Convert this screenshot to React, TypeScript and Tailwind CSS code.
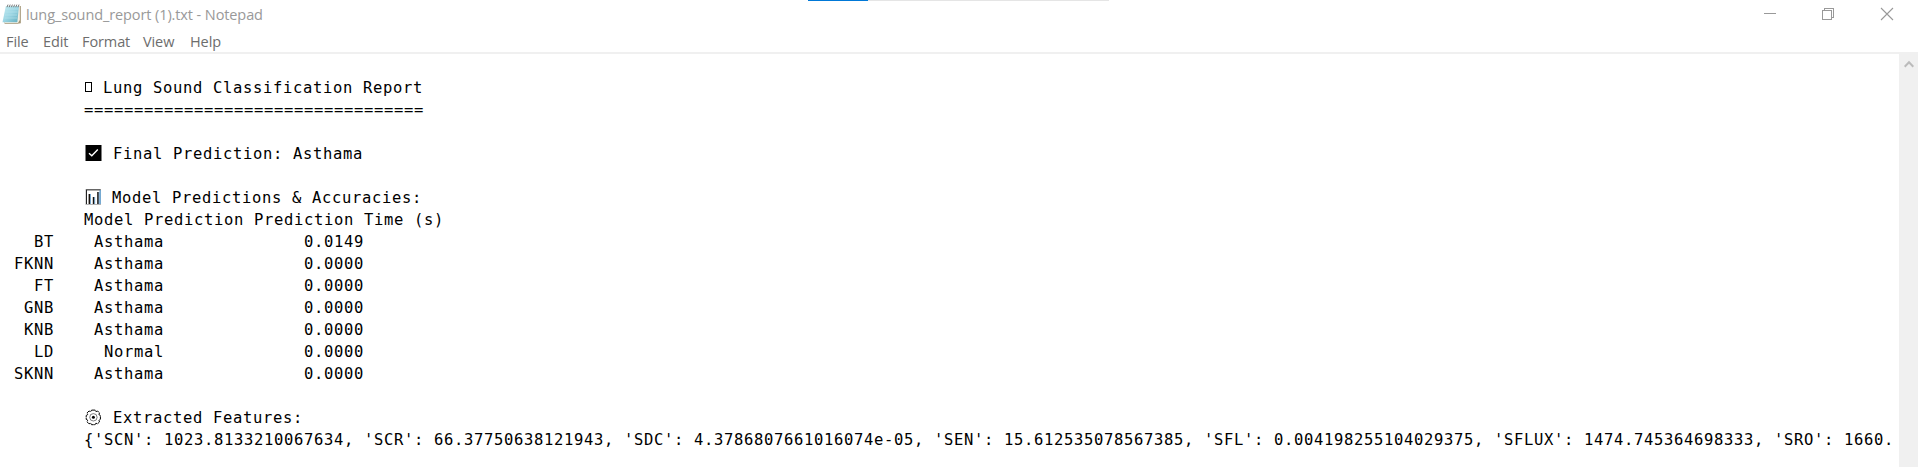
import React from "react";

const menus = [
  { label: "File", cls: "w-[37px]" },
  { label: "Edit", cls: "w-[39px]" },
  { label: "Format", cls: "w-[61px]" },
  { label: "View", cls: "w-[47px]" },
  { label: "Help", cls: "w-[40px]" },
];

const rows = [
  ["BT", "Asthama", "0.0149"],
  ["FKNN", "Asthama", "0.0000"],
  ["FT", "Asthama", "0.0000"],
  ["GNB", "Asthama", "0.0000"],
  ["KNB", "Asthama", "0.0000"],
  ["LD", "Normal", "0.0000"],
  ["SKNN", "Asthama", "0.0000"],
];

const features =
  "{'SCN': 1023.8133210067634, 'SCR': 66.37750638121943, 'SDC': 4.3786807661016074e-05, 'SEN': 15.612535078567385, 'SFL': 0.004198255104029375, 'SFLUX': 1474.745364698333, 'SRO': 1660.";

function NotepadIcon() {
  return (
    <svg width="20" height="21" viewBox="0 0 20 21" className="shrink-0">
      <defs>
        <linearGradient id="pad" x1="0" y1="0" x2="1" y2="1">
          <stop offset="0" stopColor="#c5edf3" />
          <stop offset="0.5" stopColor="#9bd5e3" />
          <stop offset="1" stopColor="#63aebf" />
        </linearGradient>
      </defs>
      <path d="M4.5 2H18.8V19.2L15.5 19.8H2.5z" fill="#a29575" />
      <path d="M4 2H17.8V16L16 19H3z" fill="#f3eee3" />
      <path d="M3.8 2.2H17L15.3 18.2H0.5z" fill="url(#pad)" />
      <path d="M4 5H16M3.5 8H15.5M3 11H15M2.5 14H15" stroke="#b9e4ec" strokeWidth="0.6" />
      <path d="M5 3.2L6 .6M7.2 3.2L8.2 .6M9.4 3.2L10.4 .6M11.6 3.2L12.6 .6M13.8 3.2L14.8 .6M16 3.2L17 .6" stroke="#77797a" strokeWidth="1" />
    </svg>
  );
}

function CheckIcon() {
  return (
    <svg width="29" height="22" viewBox="0 0 29 22" className="shrink-0">
      <rect x="1.5" y="2" width="16" height="16" fill="#000" />
      <path d="M5 10.2L7.8 12.8L13.8 6.6" fill="none" stroke="#fff" strokeWidth="1.4" />
    </svg>
  );
}

function ChartIcon() {
  return (
    <svg width="28" height="22" viewBox="0 -2 28 22" className="shrink-0">
      <rect x="1.5" y="0" width="15.5" height="16" fill="#b5b5b5" />
      <rect x="3" y="1" width="12.5" height="14" fill="#fff" />
      <path d="M2 .9H16.5" stroke="#333" strokeWidth="1" />
      <path d="M2.5 1V15" stroke="#222" strokeWidth="1" />
      <path d="M16.2 1V15" stroke="#5aa5e0" strokeWidth="1" />
      <path d="M5.4 5V15M9.6 8V15M14 3V15" stroke="#18120e" strokeWidth="1.6" />
      <path d="M6.5 5V15M10.7 8V15M15.1 3V15" stroke="#4e93ce" strokeWidth="0.7" />
    </svg>
  );
}

function GearIcon() {
  return (
    <svg width="29" height="22" viewBox="0 -2 29 22" className="shrink-0">
      <g fill="none" stroke="#000">
        <path
          d="M7.6 1.1h3.6l.7 1.5 1.7-.6 1.9 1.9-.6 1.7 1.5.9v3.8l-1.5.9.6 1.7-1.9 1.9-1.7-.6-.8 1.5H7.5l-.8-1.5-1.7.6-1.9-1.9.6-1.7-1.5-.9V6.5l1.5-.9-.6-1.7L5 2l1.7.6z"
          strokeWidth="1"
          strokeDasharray="4.2 .5"
        />
        <circle cx="9.4" cy="8.3" r="3.7" strokeWidth="0.5" />
      </g>
      <circle cx="9.4" cy="8.3" r="1.5" fill="#000" />
    </svg>
  );
}

function Line({ children }: { children?: React.ReactNode }) {
  return <div className="h-[22px] whitespace-pre">{children}</div>;
}

function IconLine({ icon, children }: { icon: React.ReactNode; children: React.ReactNode }) {
  return (
    <div className="flex h-[22px] whitespace-pre pl-[80px]">
      {icon}
      <span>{children}</span>
    </div>
  );
}

export default function App() {
  return (
    <div className="relative flex h-[467px] w-[1918px] flex-col overflow-hidden bg-white font-['Open_Sans',sans-serif]">
      <div className="absolute left-[808px] top-0 flex h-px w-[301px] bg-[#e5e5e5]">
        <div className="w-[60px] bg-[#0078d7]" />
      </div>
      <header className="flex h-[30px] items-start justify-between pl-[2px]">
        <div className="flex items-start pt-[4px]">
          <NotepadIcon />
          <span className="ml-[4px] mt-px text-[14.5px] leading-[20px] tracking-[-0.1px] text-[#999]">
            lung_sound_report (1).txt - Notepad
          </span>
        </div>
        <svg width="154" height="30" viewBox="0 0 154 30" fill="none" stroke="#999" shapeRendering="crispEdges">
          <path d="M0 13.5H12" />
          <path d="M58.5 10.5H67.5V19.5H58.5zM60.5 10V8.5H69.5V17.5H68" />
          <path d="M117 8L129 20M129 8L117 20" shapeRendering="auto" strokeWidth="1.1" />
        </svg>
      </header>
      <nav className="flex h-[22px] pl-[6px] pt-px text-[14.5px] leading-[22px] tracking-[-0.1px] text-[#6d6d6d]">
        {menus.map((m) => (
          <span key={m.label} className={m.cls}>
            {m.label}
          </span>
        ))}
      </nav>
      <div className="h-[2px] bg-[#f0f0f0]" />
      <main className="flex min-h-0 flex-1">
        <div className="min-w-0 flex-1 overflow-hidden pl-[4px] pt-px font-['DejaVu_Sans_Mono',monospace] text-[15.5px] leading-[22px] tracking-[0.668px] text-black">
          <Line />
          <IconLine
            icon={
              <svg width="19" height="22" viewBox="0 0 19 22" className="shrink-0">
                <rect x="1.5" y="5.5" width="6" height="9" fill="none" stroke="#000" />
              </svg>
            }
          >
            Lung Sound Classification Report
          </IconLine>
          <Line>{" ".repeat(8) + "=".repeat(34)}</Line>
          <Line />
          <IconLine icon={<CheckIcon />}>Final Prediction: Asthama</IconLine>
          <Line />
          <IconLine icon={<ChartIcon />}>Model Predictions &amp; Accuracies:</IconLine>
          <Line>{" ".repeat(8) + "Model Prediction Prediction Time (s)"}</Line>
          {rows.map(([model, prediction, time]) => (
            <Line key={model}>{model.padStart(5) + prediction.padStart(11) + time.padStart(20)}</Line>
          ))}
          <Line />
          <IconLine icon={<GearIcon />}>Extracted Features:</IconLine>
          <Line>{" ".repeat(8) + features}</Line>
        </div>
        <div className="-mt-px flex w-[19px] justify-center bg-[#f0f0f0]">
          <svg width="10" height="20" viewBox="0 0 10 20">
            <path d="M.7 13.7L5 9.3L9.3 13.7" fill="none" stroke="#bbb" strokeWidth="2" />
          </svg>
        </div>
      </main>
    </div>
  );
}
